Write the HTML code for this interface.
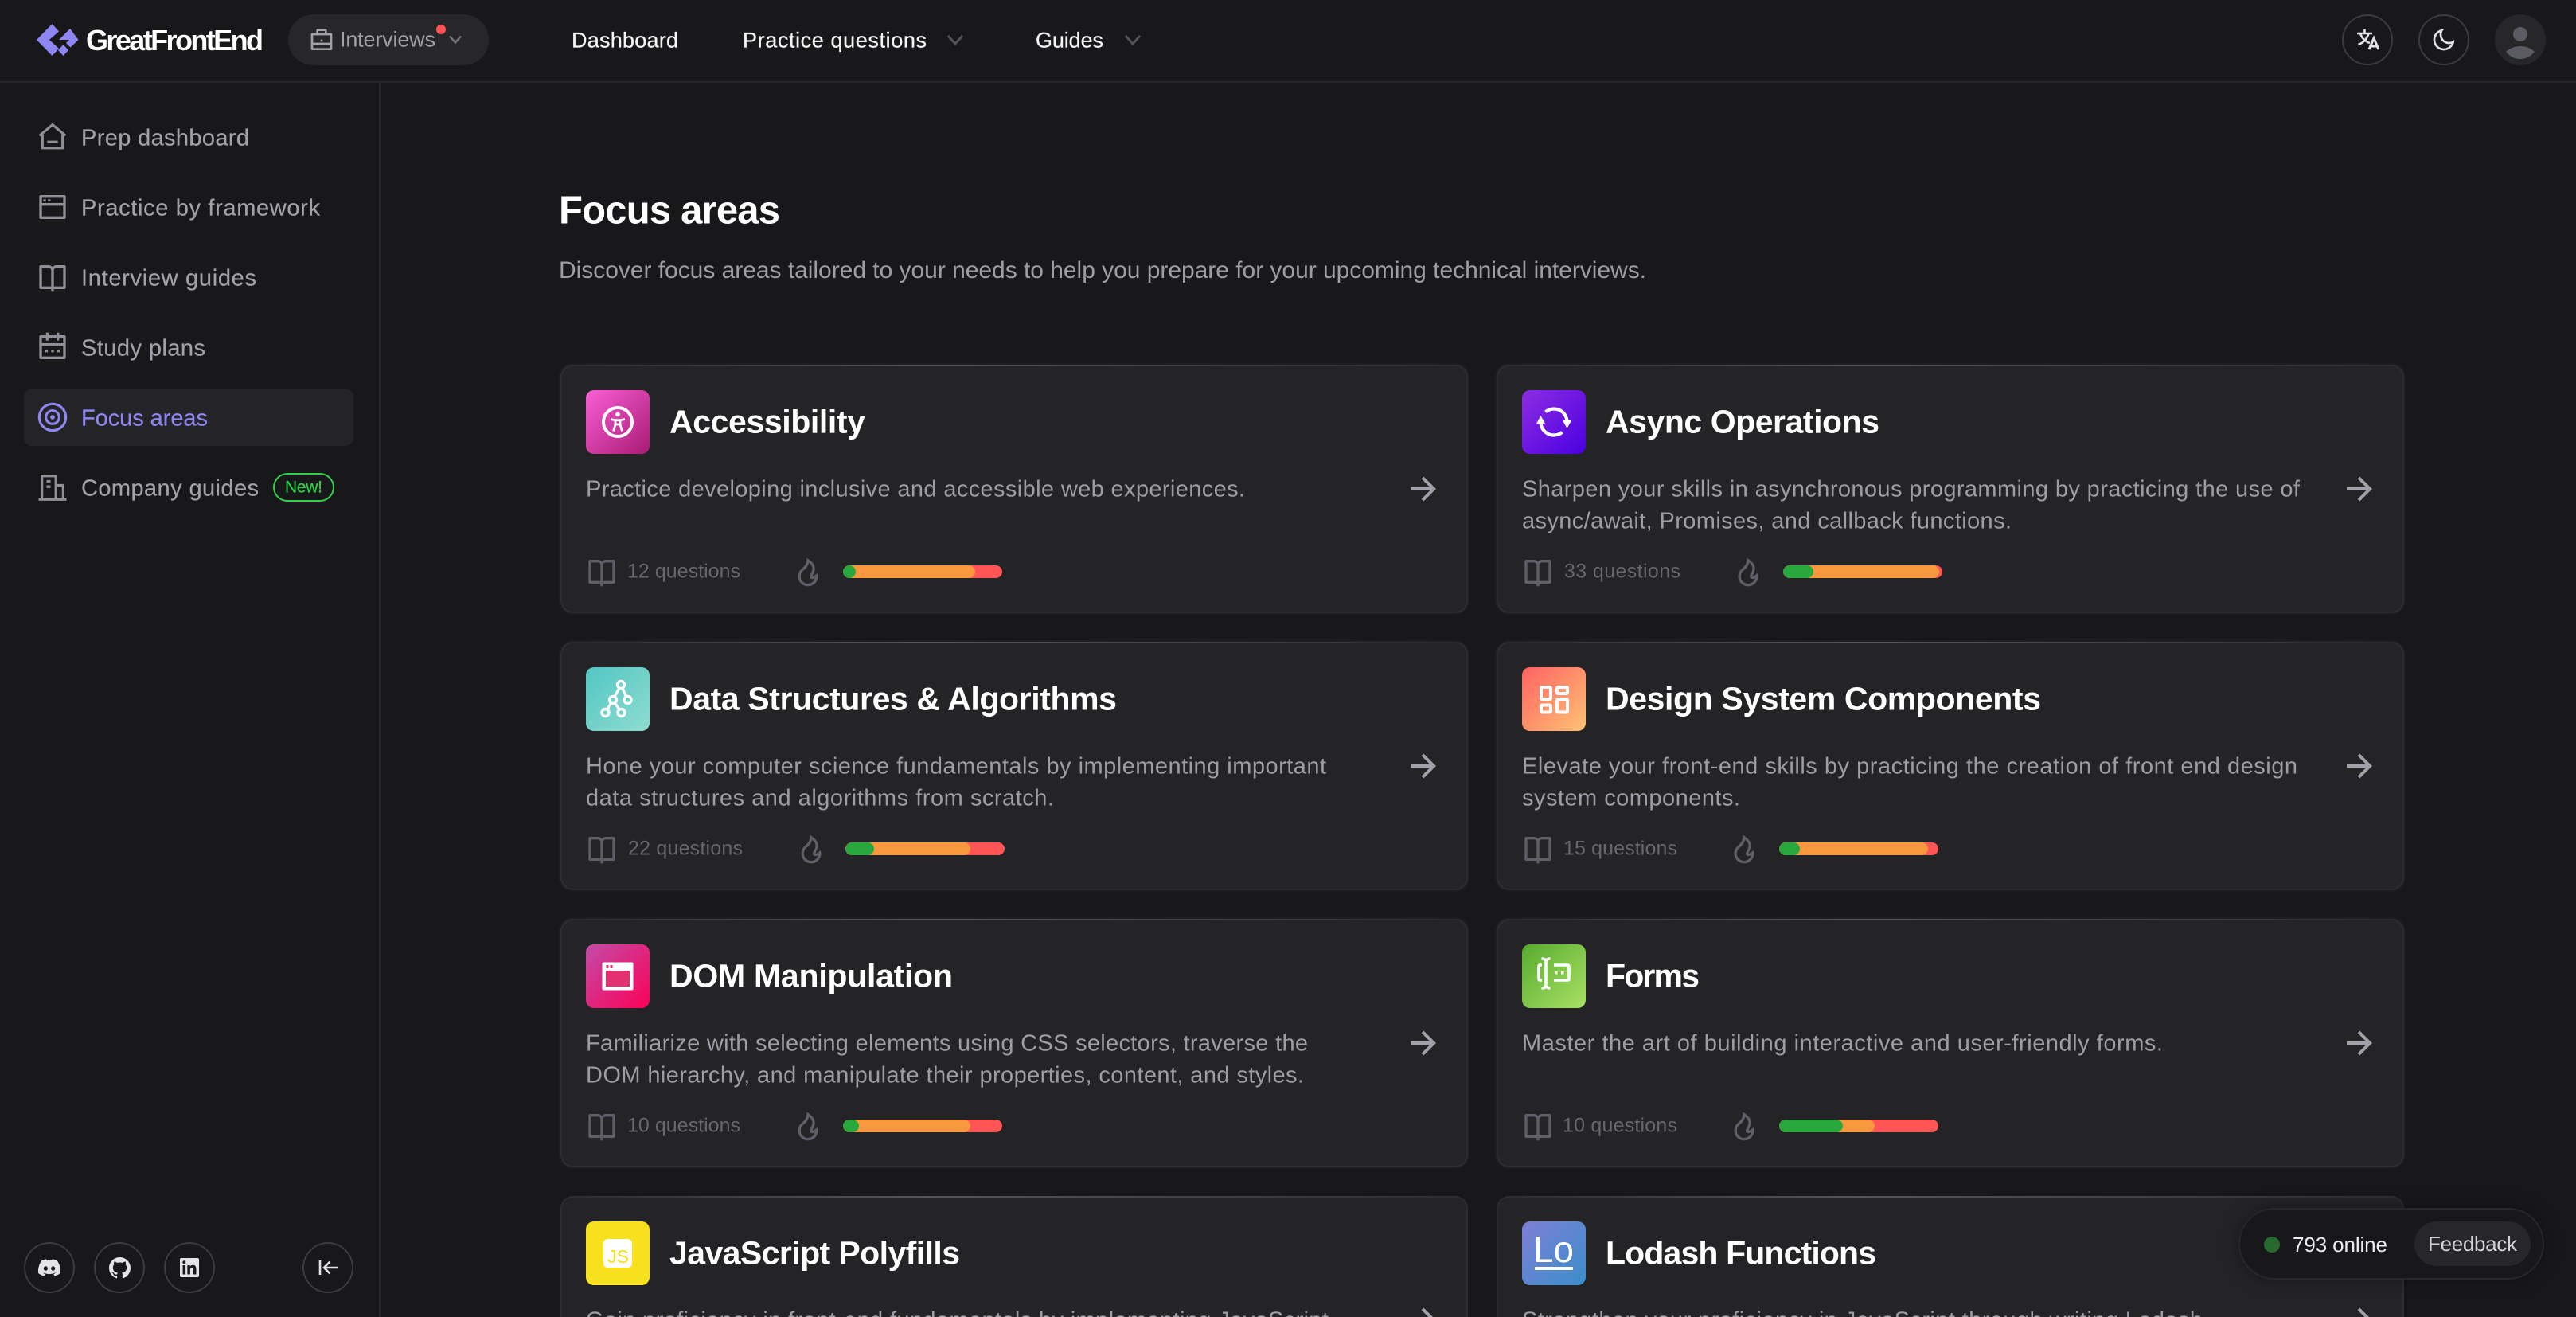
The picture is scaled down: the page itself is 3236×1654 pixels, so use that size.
<!DOCTYPE html>
<html lang="en"><head><meta charset="utf-8"><title>Focus areas</title>
<style>
*{box-sizing:border-box}
html,body{margin:0;padding:0;width:3236px;height:1654px;overflow:hidden;background:#18181b;font-family:"Liberation Sans",Arial,sans-serif}
.page{position:relative;width:3236px;height:1654px;overflow:hidden}
.t{position:absolute;white-space:nowrap;line-height:1;transform:translateY(-50%)}
svg{position:absolute;display:block;overflow:visible}
.hline{position:absolute;left:0;top:102px;width:3236px;height:2px;background:#27272a}
.vline{position:absolute;left:476px;top:104px;width:2px;height:1550px;background:#27272a}
.pill{position:absolute;left:362px;top:18px;width:252px;height:64px;border-radius:32px;background:#27272a}
.dot{position:absolute;left:548px;top:31px;width:12px;height:12px;border-radius:50%;background:#ff5353}
.nav{font-size:27px;color:#f4f4f5;-webkit-text-stroke:.25px #f4f4f5}
.side{font-size:29px;color:#a1a1aa;left:102px;-webkit-text-stroke:.2px currentColor}
.active{position:absolute;left:30px;top:488px;width:414px;height:72px;border-radius:10px;background:#242427}
.badge{position:absolute;left:343px;top:594px;width:77px;height:36px;border:2px solid #2ed14a;border-radius:18px}
.circ{position:absolute;width:64px;height:64px;border-radius:50%;border:2px solid #3a3a40}
.card{position:absolute;width:1140px;height:312px;border-radius:16px;background:#242427;box-shadow:inset 0 0 0 2px #2d2d31,0 0 0 2px #1e1e21}
.card::before{content:"";position:absolute;left:16px;right:16px;top:0;height:2px;background:linear-gradient(90deg,#2d2d31,#55555c 40%,#2d2d31)}
.last{height:152px;border-radius:16px 16px 0 0;overflow:hidden;box-shadow:inset 2px 0 0 #2d2d31,inset -2px 0 0 #2d2d31,inset 0 2px 0 #2d2d31}
.ic{position:absolute;left:32px;top:32px;width:80px;height:80px;border-radius:10px}
.ic svg{left:0;top:0}
.ttl{left:137px;top:72px;font-size:41px;font-weight:700;color:#fff}
.d{left:32px;font-size:29px;color:#9d9da5}
.q{font-size:25px;color:#66666e;top:260px}
.bar{position:absolute;top:252px;width:200px;height:16px;border-radius:8px;background:#ff5555;overflow:hidden}
.bar i{position:absolute;left:0;top:0;height:16px;border-radius:8px}
.bar .o{background:#f9983e}.bar .g{background:#28a83c}
.widget{position:absolute;left:2812px;top:1517px;width:384px;height:90px;border-radius:45px;background:#18181b;border:2px solid #27272a;box-shadow:0 0 24px rgba(0,0,0,.35)}
</style></head><body><div class="page">

<svg width="0" height="0" style="position:absolute"><defs>
<path id="book" d="M13 21V23H11V21H3C2.44772 21 2 20.5523 2 20V4C2 3.44772 2.44772 3 3 3H9C10.1947 3 11.2671 3.52375 12 4.35418C12.7329 3.52375 13.8053 3 15 3H21C21.5523 3 22 3.44772 22 4V20C22 20.5523 21.5523 21 21 21H13ZM20 19V5H15C13.8954 5 13 5.89543 13 7V19H20ZM11 19V7C11 5.89543 10.1046 5 9 5H4V19H11Z" fill-rule="evenodd"/>
<path id="fire" d="M12 23C16.1421 23 19.5 19.6421 19.5 15.5C19.5 14.6345 19.2697 13.8032 19 13.0296C17.3333 14.6765 16.0667 15.5 15.2 15.5C19.1954 8.5 17 5.5 11 1.5C11.5 6.49951 8.20403 8.77375 6.86179 10.0366C5.40786 11.4045 4.5 13.3462 4.5 15.5C4.5 19.6421 7.85786 23 12 23ZM12.7094 5.23498C15.9511 7.98528 15.9666 10.1223 13.463 14.5086C12.7024 15.8414 13.6648 17.5 15.2 17.5C15.8884 17.5 16.5841 17.2992 17.3189 16.9051C16.6979 19.262 14.5519 21 12 21C8.96 21 6.5 18.54 6.5 15.5C6.5 13.97 7.14 12.55 8.23 11.51C8.44 11.31 9.54 10.41 9.59 10.36C10.32 9.71 10.92 9.05 11.39 8.29C11.97 7.36 12.4 6.34 12.71 5.23Z" fill-rule="evenodd"/>
<path id="arr" d="M16.1716 10.9999L10.8076 5.63589L12.2218 4.22168L20 11.9999L12.2218 19.778L10.8076 18.3638L16.1716 12.9999H4V10.9999H16.1716Z"/>
</defs></svg>

<!-- header -->
<svg style="left:0;top:0" width="120" height="100" fill="#8e87f3">
<polygon points="46,50 65.5,30 74,39.5 62,50 74,61 65.5,70"/>
<polygon points="88,36 98.5,50 88.5,59.5 83,54 87,50 74,50 80,44"/>
<polygon points="79.5,56 86,63 79.5,70 73,63"/>
</svg>
<span class="t" style="left:108px;top:51px;--w:223;font-size:36px;font-weight:700;color:#fff">GreatFrontEnd</span>
<div class="pill"></div>
<svg style="left:388px;top:35px" width="32" height="32" viewBox="0 0 24 24" fill="#a1a1aa"><path fill-rule="evenodd" d="M7 5V2C7 1.44772 7.44772 1 8 1H16C16.5523 1 17 1.44772 17 2V5H21C21.5523 5 22 5.44772 22 6V20C22 20.5523 21.5523 21 21 21H3C2.44772 21 2 20.5523 2 20V6C2 5.44772 2.44772 5 3 5H7ZM4 16V19H20V16H4ZM4 14H20V7H4V14ZM9 3V5H15V3H9ZM11 11H13V13H11V11Z"/></svg>
<span class="t" style="left:427px;top:50px;--w:120;font-size:27px;color:#a1a1aa">Interviews</span>
<div class="dot"></div>
<svg style="left:560px;top:38px" width="24" height="24" fill="none" stroke="#71717a" stroke-width="2.6"><path d="M5 7.5l7 8 7-8"/></svg>
<span class="t nav" style="left:718px;top:51px;--w:134">Dashboard</span>
<span class="t nav" style="left:933px;top:51px;--w:231">Practice questions</span>
<svg style="left:1188px;top:38px" width="24" height="24" fill="none" stroke="#52525b" stroke-width="3"><path d="M3 7l9 10 9-10"/></svg>
<span class="t nav" style="left:1301px;top:51px;--w:85">Guides</span>
<svg style="left:1411px;top:38px" width="24" height="24" fill="none" stroke="#52525b" stroke-width="3"><path d="M3 7l9 10 9-10"/></svg>

<div class="circ" style="left:2942px;top:18px"></div>
<svg style="left:2950px;top:26px" width="48" height="48" fill="none" stroke="#e4e4e7" stroke-width="2.6"><path d="M11 16h19M20.5 11v5M25.5 16c-2 7-7 12-13 14M15 16c2 6 6 10 12 12"/><path d="M26 36l6-14 6 14M28 32h8" stroke-width="3"/></svg>
<div class="circ" style="left:3038px;top:18px"></div>
<svg style="left:3054px;top:34px" width="32" height="32" viewBox="0 0 24 24" fill="#e4e4e7"><path d="M10 7C10 10.866 13.134 14 17 14C18.9584 14 20.729 13.1957 21.9995 11.8995C22 11.933 22 11.9665 22 12C22 17.5228 17.5228 22 12 22C6.47715 22 2 17.5228 2 12C2 6.47715 6.47715 2 12 2C12.0335 2 12.067 2 12.1005 2.00049C10.8043 3.27098 10 5.04157 10 7ZM4 12C4 16.4183 7.58172 20 12 20C15.0583 20 17.7158 18.2839 19.062 15.7621C18.3945 15.9187 17.7035 16 17 16C12.0294 16 8 11.9706 8 7C8 6.29648 8.08133 5.60547 8.2379 4.938C5.71611 6.28423 4 8.9417 4 12Z" fill-rule="evenodd"/></svg>
<svg style="left:3134px;top:18px" width="64" height="64"><circle cx="32" cy="32" r="32" fill="#27272a"/><circle cx="32" cy="25" r="9" fill="#5b5b63"/><path d="M14 47c5-4.500 11-7 18-7s13 2.500 18 7c-5 6-11 9-18 9s-13-3-18-9z" fill="#5b5b63"/></svg>
<div class="hline"></div>

<!-- sidebar -->
<div class="vline"></div>
<div class="active"></div>
<svg style="left:46px;top:152px" width="40" height="40" viewBox="0 0 24 24" fill="none" stroke="#8f8f97" stroke-width="1.9"><path d="M2.2 11 12 2.800l9.800 8.200M4.400 10v10.300h15.200V10M8 15.700h8"/></svg>
<span class="t side" style="top:174px;--w:211">Prep dashboard</span>
<svg style="left:46px;top:240px" width="40" height="40" viewBox="0 0 24 24" fill="#8f8f97"><path fill-rule="evenodd" d="M3 3H21C21.5523 3 22 3.44772 22 4V20C22 20.5523 21.5523 21 21 21H3C2.44772 21 2 20.5523 2 20V4C2 3.44772 2.44772 3 3 3ZM20 11H4V19H20V11ZM20 9V5H4V9H20ZM5 6.200H7V7.800H5V6.200ZM8.500 6.200H10.500V7.800H8.500V6.200Z"/></svg>
<span class="t side" style="top:262px;--w:300">Practice by framework</span>
<svg style="left:46px;top:328px" width="40" height="40" viewBox="0 0 24 24" fill="#8f8f97"><use href="#book"/></svg>
<span class="t side" style="top:350px;--w:220">Interview guides</span>
<svg style="left:46px;top:416px" width="40" height="40" viewBox="0 0 24 24" fill="#8f8f97"><path fill-rule="evenodd" d="M9 1V3H15V1H17V3H21C21.5523 3 22 3.44772 22 4V20C22 20.5523 21.5523 21 21 21H3C2.44772 21 2 20.5523 2 20V4C2 3.44772 2.44772 3 3 3H7V1H9ZM20 11H4V19H20V11ZM7 5H4V9H20V5H17V7H15V5H9V7H7V5Z"/><path d="M6.500 14h2v1.800h-2zM11 14h2v1.800h-2zM15.500 14h2v1.800h-2z"/></svg>
<span class="t side" style="top:438px;--w:156">Study plans</span>
<svg style="left:46px;top:504px" width="40" height="40" viewBox="0 0 24 24" fill="none" stroke="#8e87f3" stroke-width="1.9"><circle cx="12" cy="12" r="10"/><circle cx="12" cy="12" r="5"/><circle cx="12" cy="12" r="1.700" fill="#8e87f3" stroke="none"/></svg>
<span class="t side" style="top:526px;--w:159;color:#8e87f3">Focus areas</span>
<svg style="left:46px;top:592px" width="40" height="40" viewBox="0 0 24 24" fill="none" stroke="#8f8f97" stroke-width="1.900"><path d="M1.500 21.200h21M4 21V3.500h10.500V21M14.500 10.500h5.500V21"/><path d="M7.500 7.500h3M7.500 11.500h3" stroke-width="2"/></svg>
<span class="t side" style="top:614px;--w:223">Company guides</span>
<div class="badge"></div>
<span class="t" style="left:358px;top:612px;--w:47;font-size:21px;color:#2ed14a;-webkit-text-stroke:.2px #2ed14a">New!</span>

<div class="circ" style="left:30px;top:1560px"></div>
<svg style="left:46px;top:1576px" width="32" height="32" viewBox="0 0 24 24" fill="#e4e4e7"><path fill-rule="evenodd" d="M19.3034 5.33716C17.9344 4.71103 16.4805 4.2547 14.9629 4C14.7719 4.32899 14.5596 4.77471 14.411 5.12492C12.7969 4.89144 11.1944 4.89144 9.60255 5.12492C9.45397 4.77471 9.2311 4.32899 9.05068 4C7.52251 4.2547 6.06861 4.71103 4.70915 5.33716C1.96053 9.39111 1.21766 13.3495 1.5891 17.2549C3.41443 18.5815 5.17612 19.388 6.90701 19.9187C7.33151 19.3456 7.71356 18.73 8.04255 18.0827C7.41641 17.8492 6.82211 17.5627 6.24904 17.2231C6.39762 17.117 6.5462 17.0003 6.68416 16.8835C10.1438 18.4648 13.8911 18.4648 17.3082 16.8835C17.4568 17.0003 17.5948 17.117 17.7434 17.2231C17.1703 17.5627 16.576 17.8492 15.9499 18.0827C16.2789 18.73 16.6609 19.3456 17.0854 19.9187C18.8152 19.388 20.5875 18.5815 22.4033 17.2549C22.8596 12.7341 21.6806 8.80747 19.3034 5.33716ZM8.5201 14.8459C7.48007 14.8459 6.63107 13.9014 6.63107 12.7447C6.63107 11.5879 7.45884 10.6434 8.5201 10.6434C9.57071 10.6434 10.4303 11.5879 10.4091 12.7447C10.4091 13.9014 9.57071 14.8459 8.5201 14.8459ZM15.4936 14.8459C14.4535 14.8459 13.6034 13.9014 13.6034 12.7447C13.6034 11.5879 14.4323 10.6434 15.4936 10.6434C16.5442 10.6434 17.4038 11.5879 17.3825 12.7447C17.3825 13.9014 16.5548 14.8459 15.4936 14.8459Z"/></svg>
<div class="circ" style="left:118px;top:1560px"></div>
<svg style="left:136.500px;top:1578.500px" width="27" height="27" viewBox="0 0 16 16" fill="#e4e4e7"><path d="M8 0C3.58 0 0 3.58 0 8c0 3.54 2.29 6.53 5.47 7.59.4.07.55-.17.55-.38 0-.19-.01-.82-.01-1.49-2.01.37-2.53-.49-2.69-.94-.09-.23-.48-.94-.82-1.13-.28-.15-.68-.52-.01-.53.63-.01 1.08.58 1.23.82.72 1.21 1.87.87 2.33.66.07-.52.28-.87.51-1.07-1.78-.2-3.64-.89-3.64-3.95 0-.87.31-1.59.82-2.15-.08-.2-.36-1.02.08-2.12 0 0 .67-.21 2.2.82.64-.18 1.32-.27 2-.27.68 0 1.36.09 2 .27 1.53-1.04 2.2-.82 2.2-.82.44 1.1.16 1.92.08 2.12.51.56.82 1.27.82 2.15 0 3.07-1.87 3.75-3.65 3.95.29.25.54.73.54 1.48 0 1.07-.01 1.93-.01 2.2 0 .21.15.46.55.38A8.013 8.013 0 0016 8c0-4.42-3.58-8-8-8z"/></svg>
<div class="circ" style="left:206px;top:1560px"></div>
<svg style="left:226px;top:1580px" width="24" height="24" viewBox="0 0 24 24" fill="#e4e4e7"><path d="M20.447 20.452h-3.554v-5.569c0-1.328-.027-3.037-1.852-3.037-1.853 0-2.136 1.445-2.136 2.939v5.667H9.351V9h3.414v1.561h.046c.477-.9 1.637-1.85 3.37-1.85 3.601 0 4.267 2.37 4.267 5.455v6.286zM5.337 7.433a2.062 2.062 0 01-2.063-2.065 2.064 2.064 0 112.063 2.065zm1.782 13.019H3.555V9h3.564v11.452zM22.225 0H1.771C.792 0 0 .774 0 1.729v20.542C0 23.227.792 24 1.771 24h20.451C23.2 24 24 23.227 24 22.271V1.729C24 .774 23.2 0 22.222 0h.003z"/></svg>
<div class="circ" style="left:380px;top:1560px"></div>
<svg style="left:396px;top:1576px" width="32" height="32" fill="none" stroke="#e4e4e7" stroke-width="2.600"><path d="M6 7v18M28 16H11M18.500 8.500 11 16l7.500 7.500"/></svg>

<!-- main -->
<span class="t" style="left:702px;top:265px;--w:278;font-size:49px;font-weight:700;color:#fff">Focus areas</span>
<span class="t" style="left:702px;top:340px;--w:1366;font-size:30px;color:#9d9da5">Discover focus areas tailored to your needs to help you prepare for your upcoming technical interviews.</span>

<!-- Card 1 -->
<div class="card" style="left:704px;top:458px">
<div class="ic" style="background:linear-gradient(135deg,#f95fd6,#a91b74)"><svg width="80" height="80" fill="none" stroke="#fff" stroke-width="2.800"><circle cx="40" cy="40" r="18" stroke-width="4"/><circle cx="40" cy="30.500" r="2.800" fill="#fff" stroke="none"/><path d="M31 36.500l6 1.200h6l6-1.200M37 37.700V43l-2.500 8.500M43 37.700V43l2.500 8.500M37 43h6"/></svg></div>
<span class="t ttl" style="--w:246">Accessibility</span>
<span class="t d" style="top:157px;--w:828">Practice developing inclusive and accessible web experiences.</span>
<svg style="left:1060px;top:132px" width="48" height="48" viewBox="0 0 24 24" fill="#a1a1aa"><use href="#arr"/></svg>
<svg style="left:32px;top:240px" width="40" height="40" viewBox="0 0 24 24" fill="#5f5f68"><use href="#book"/></svg>
<span class="t q" style="left:84px;--w:142">12 questions</span>
<svg style="left:290.500px;top:240px" width="40" height="40" viewBox="0 0 24 24" fill="#5f5f68"><use href="#fire"/></svg>
<div class="bar" style="left:355px"><i class="o" style="width:166px"></i><i class="g" style="width:16px"></i></div>
</div>

<!-- Card 2 -->
<div class="card" style="left:1880px;top:458px">
<div class="ic" style="background:linear-gradient(135deg,#8e2de2,#4a00e0)"><svg width="80" height="80" fill="none" stroke="#fff" stroke-width="4.200"><path d="M29.500 27.300A16.500 16.500 0 0 1 56.500 39M50.500 52.700A16.500 16.500 0 0 1 23.500 41"/><path d="M51 38h11l-5.500 10zM18 42h11l-5.500-10z" fill="#fff" stroke="none"/></svg></div>
<span class="t ttl" style="--w:344">Async Operations</span>
<span class="t d" style="top:157px;--w:977">Sharpen your skills in asynchronous programming by practicing the use of</span>
<span class="t d" style="top:197px;--w:615">async/await, Promises, and callback functions.</span>
<svg style="left:1060px;top:132px" width="48" height="48" viewBox="0 0 24 24" fill="#a1a1aa"><use href="#arr"/></svg>
<svg style="left:32px;top:240px" width="40" height="40" viewBox="0 0 24 24" fill="#5f5f68"><use href="#book"/></svg>
<span class="t q" style="left:85px;--w:146">33 questions</span>
<svg style="left:296px;top:240px" width="40" height="40" viewBox="0 0 24 24" fill="#5f5f68"><use href="#fire"/></svg>
<div class="bar" style="left:360px"><i class="o" style="width:196px"></i><i class="g" style="width:38px"></i></div>
</div>

<!-- Card 3 -->
<div class="card" style="left:704px;top:806px">
<div class="ic" style="background:linear-gradient(135deg,#52c6c3,#8edcd0)"><svg width="80" height="80" fill="none" stroke="#fff" stroke-width="3.400"><path d="M44 22 34 41 24.500 57M44 22l8.500 19M34 41l10.500 16"/><g fill="#6fd2ca"><circle cx="44" cy="22" r="4.500"/><circle cx="52.500" cy="41" r="4.500"/><circle cx="34" cy="41" r="4.500"/><circle cx="24.500" cy="57" r="4.500"/><circle cx="44.500" cy="57" r="4.500"/></g></svg></div>
<span class="t ttl" style="--w:562">Data Structures &amp; Algorithms</span>
<span class="t d" style="top:157px;--w:930">Hone your computer science fundamentals by implementing important</span>
<span class="t d" style="top:197px;--w:588">data structures and algorithms from scratch.</span>
<svg style="left:1060px;top:132px" width="48" height="48" viewBox="0 0 24 24" fill="#a1a1aa"><use href="#arr"/></svg>
<svg style="left:32px;top:240px" width="40" height="40" viewBox="0 0 24 24" fill="#5f5f68"><use href="#book"/></svg>
<span class="t q" style="left:85px;--w:144">22 questions</span>
<svg style="left:294.500px;top:240px" width="40" height="40" viewBox="0 0 24 24" fill="#5f5f68"><use href="#fire"/></svg>
<div class="bar" style="left:358px"><i class="o" style="width:157px"></i><i class="g" style="width:36px"></i></div>
</div>

<!-- Card 4 -->
<div class="card" style="left:1880px;top:806px">
<div class="ic" style="background:linear-gradient(135deg,#ff6262,#ffc274)"><svg width="80" height="80" fill="none" stroke="#fff" stroke-width="4"><rect x="24" y="25" width="12" height="15" rx="1"/><rect x="44" y="25" width="13" height="8" rx="1"/><rect x="24" y="47.500" width="12" height="9" rx="1"/><rect x="44" y="40" width="13" height="16.500" rx="1"/></svg></div>
<span class="t ttl" style="--w:547">Design System Components</span>
<span class="t d" style="top:157px;--w:974">Elevate your front-end skills by practicing the creation of front end design</span>
<span class="t d" style="top:197px;--w:274">system components.</span>
<svg style="left:1060px;top:132px" width="48" height="48" viewBox="0 0 24 24" fill="#a1a1aa"><use href="#arr"/></svg>
<svg style="left:32px;top:240px" width="40" height="40" viewBox="0 0 24 24" fill="#5f5f68"><use href="#book"/></svg>
<span class="t q" style="left:84px;--w:143">15 questions</span>
<svg style="left:290.500px;top:240px" width="40" height="40" viewBox="0 0 24 24" fill="#5f5f68"><use href="#fire"/></svg>
<div class="bar" style="left:354.500px"><i class="o" style="width:187px"></i><i class="g" style="width:26.500px"></i></div>
</div>

<!-- Card 5 -->
<div class="card" style="left:704px;top:1154px">
<div class="ic" style="background:linear-gradient(135deg,#c24ca8,#fb0056)"><svg width="80" height="80"><rect x="20.500" y="22.500" width="39" height="35" rx="2" fill="#fff"/><rect x="25" y="33" width="30" height="20" fill="#e3306e"/><rect x="25.500" y="26" width="3" height="4" fill="#e3306e"/><rect x="30.500" y="26" width="3" height="4" fill="#e3306e"/></svg></div>
<span class="t ttl" style="--w:356">DOM Manipulation</span>
<span class="t d" style="top:157px;--w:907">Familiarize with selecting elements using CSS selectors, traverse the</span>
<span class="t d" style="top:197px;--w:902">DOM hierarchy, and manipulate their properties, content, and styles.</span>
<svg style="left:1060px;top:132px" width="48" height="48" viewBox="0 0 24 24" fill="#a1a1aa"><use href="#arr"/></svg>
<svg style="left:32px;top:240px" width="40" height="40" viewBox="0 0 24 24" fill="#5f5f68"><use href="#book"/></svg>
<span class="t q" style="left:84px;--w:142">10 questions</span>
<svg style="left:290.500px;top:240px" width="40" height="40" viewBox="0 0 24 24" fill="#5f5f68"><use href="#fire"/></svg>
<div class="bar" style="left:355px"><i class="o" style="width:160px"></i><i class="g" style="width:20px"></i></div>
</div>

<!-- Card 6 -->
<div class="card" style="left:1880px;top:1154px">
<div class="ic" style="background:linear-gradient(135deg,#57ab2f,#a9e165)"><svg width="80" height="80" fill="none" stroke="#fff" stroke-width="3.600"><path d="M25 26h-2.500a1.500 1.500 0 0 0-1.500 1.500v16a1.500 1.500 0 0 0 1.500 1.500H25M24.500 18c3 0 5 1 5.500 3 .5-2 3-3 5.500-3M30 21v31M24.500 55c3 0 5-1 5.500-3 .5 2 3 3 5.500 3M40 26h17.500a1.500 1.500 0 0 1 1.500 1.500v16a1.500 1.500 0 0 1-1.500 1.500H40"/><rect x="41" y="34" width="3.500" height="3.500" fill="#fff" stroke="none"/><rect x="49" y="34" width="3.500" height="3.500" fill="#fff" stroke="none"/></svg></div>
<span class="t ttl" style="--w:118">Forms</span>
<span class="t d" style="top:157px;--w:805">Master the art of building interactive and user-friendly forms.</span>
<svg style="left:1060px;top:132px" width="48" height="48" viewBox="0 0 24 24" fill="#a1a1aa"><use href="#arr"/></svg>
<svg style="left:32px;top:240px" width="40" height="40" viewBox="0 0 24 24" fill="#5f5f68"><use href="#book"/></svg>
<span class="t q" style="left:83px;--w:144">10 questions</span>
<svg style="left:290.500px;top:240px" width="40" height="40" viewBox="0 0 24 24" fill="#5f5f68"><use href="#fire"/></svg>
<div class="bar" style="left:355px"><i class="o" style="width:120px"></i><i class="g" style="width:80px"></i></div>
</div>

<!-- Card 7 -->
<div class="card last" style="left:704px;top:1502px">
<div class="ic" style="background:#f7e01e"><svg width="80" height="80"><rect x="22" y="22" width="36" height="36" rx="5" fill="#fff"/><text x="40.500" y="52" text-anchor="middle" font-family="Liberation Sans,sans-serif" font-size="23" fill="#f7e01e">JS</text></svg></div>
<span class="t ttl" style="--w:365">JavaScript Polyfills</span>
<span class="t d" style="top:157px;--w:933">Gain proficiency in front-end fundamentals by implementing JavaScript</span>
<svg style="left:1060px;top:132px" width="48" height="48" viewBox="0 0 24 24" fill="#a1a1aa"><use href="#arr"/></svg>
</div>

<!-- Card 8 -->
<div class="card last" style="left:1880px;top:1502px">
<div class="ic" style="background:linear-gradient(135deg,#7f7fd5,#3a8ecb)"><svg width="80" height="80"><text x="14" y="51" font-family="Liberation Sans,sans-serif" font-size="46" fill="#fff" textLength="51" lengthAdjust="spacingAndGlyphs">Lo</text><rect x="16" y="57" width="48" height="4" fill="#fff"/></svg></div>
<span class="t ttl" style="--w:340">Lodash Functions</span>
<span class="t d" style="top:157px;--w:855">Strengthen your proficiency in JavaScript through writing Lodash</span>
<svg style="left:1060px;top:132px" width="48" height="48" viewBox="0 0 24 24" fill="#a1a1aa"><use href="#arr"/></svg>
</div>

<!-- widget -->
<div class="widget"></div>
<svg style="left:2844px;top:1553px" width="20" height="20"><circle cx="10" cy="10" r="10" fill="#28692f"/></svg>
<span class="t" style="left:2880px;top:1563px;--w:119;font-size:26px;color:#ececee">793 online</span>
<div style="position:absolute;left:3033px;top:1534px;width:146px;height:56px;border-radius:28px;background:#27272a"></div>
<span class="t" style="left:3050px;top:1562px;--w:112;font-size:26px;color:#d4d4d8">Feedback</span>

</div>
<script>
document.querySelectorAll('.t').forEach(function(e){
  var w=parseFloat(getComputedStyle(e).getPropertyValue('--w'));
  if(!w)return;
  var r=e.getBoundingClientRect().width,n=e.textContent.length;
  e.style.letterSpacing=((w-r)/Math.max(1,n-1))+'px';
});
</script>
</body></html>
